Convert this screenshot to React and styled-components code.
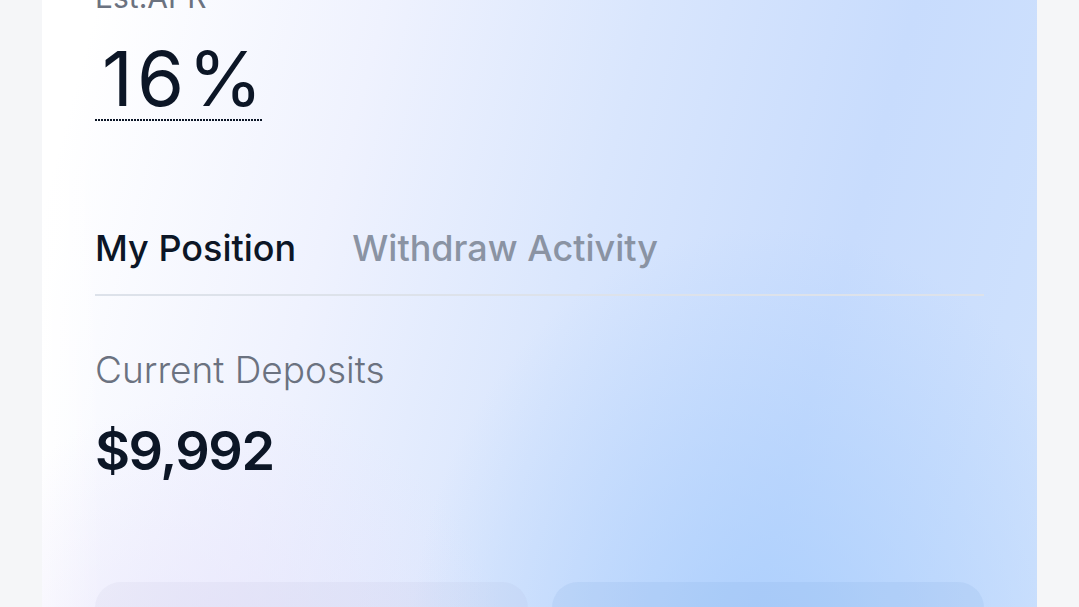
import styled, { createGlobalStyle } from "styled-components";

const GlobalStyle = createGlobalStyle`
  html, body {
    margin: 0;
    padding: 0;
    background: #f5f6f8;
    overflow: hidden;
    font-family: Inter, "Noto Sans", sans-serif;
  }
`;

const Page = styled.div`
  padding: 0 42px;
`;

const Card = styled.section`
  margin-top: -60px;
  padding: 39px 53px 40px;
  min-height: 700px;
  background:
    radial-gradient(ellipse 36% 55% at 73% 92%, rgba(165, 204, 253, 0.8) 0%, rgba(165, 204, 253, 0) 100%),
    radial-gradient(ellipse 30% 40% at 18% 98%, rgba(232, 228, 252, 0.8) 0%, rgba(232, 228, 252, 0) 100%),
    linear-gradient(to right, rgba(255, 255, 255, 0.9) 0%, rgba(255, 255, 255, 0) 6%),
    linear-gradient(105deg, #ffffff 6%, #eff2fe 30%, #d9e6fd 52%, #c8dcfd 74%, #d1e3fd 100%);
`;

const Label = styled.div`
  font-size: ${(p) => p.size || 30}px;
  line-height: ${(p) => p.lh || 36}px;
  font-weight: ${(p) => p.weight || 400};
  margin-top: ${(p) => p.gap || 0}px;
  color: #6b7280;
`;

const Apr = styled.div`
  margin-top: 23px;
  display: inline-block;
  font-size: 76px;
  line-height: 80px;
  font-weight: 400;
  letter-spacing: 4px;
  color: #0c1626;
  padding: 0 0 3px 7px;
  background: repeating-linear-gradient(to right, #0c1626 0 2px, transparent 2px 3px) left bottom / 100% 2px no-repeat;
`;

const Percent = styled.span`
  letter-spacing: 0;
`;

const Tabs = styled.div`
  margin-top: 105px;
  display: flex;
  gap: 56px;
  padding-bottom: 24px;
  border-bottom: 2px solid #dde2ea;
`;

const Tab = styled.div`
  font-size: 36px;
  line-height: 44px;
  font-weight: 500;
  color: ${(p) => (p.active ? "#0c1626" : "#8a93a3")};
`;

const Value = styled.div`
  margin-top: 27px;
  font-size: 54px;
  line-height: 64px;
  font-weight: 600;
  letter-spacing: -1.5px;
  color: #0c1626;
`;

const Actions = styled.div`
  margin-top: 99px;
  display: grid;
  grid-template-columns: 1fr 1fr;
  gap: 24px;
`;

const Action = styled.div`
  height: 72px;
  border-radius: 26px;
  background: ${(p) => (p.primary ? "rgba(120, 160, 220, 0.14)" : "rgba(150, 150, 190, 0.08)")};
`;

export default function App() {
  return (
    <>
      <GlobalStyle />
      <Page>
        <Card>
          <Label>Est.APR</Label>
          <Apr>
            16<Percent>%</Percent>
          </Apr>
          <Tabs>
            <Tab active>My Position</Tab>
            <Tab>Withdraw Activity</Tab>
          </Tabs>
          <Label size={37} lh={44} weight={300} gap={52}>
            Current Deposits
          </Label>
          <Value>$9,992</Value>
          <Actions>
            <Action />
            <Action primary />
          </Actions>
        </Card>
      </Page>
    </>
  );
}
